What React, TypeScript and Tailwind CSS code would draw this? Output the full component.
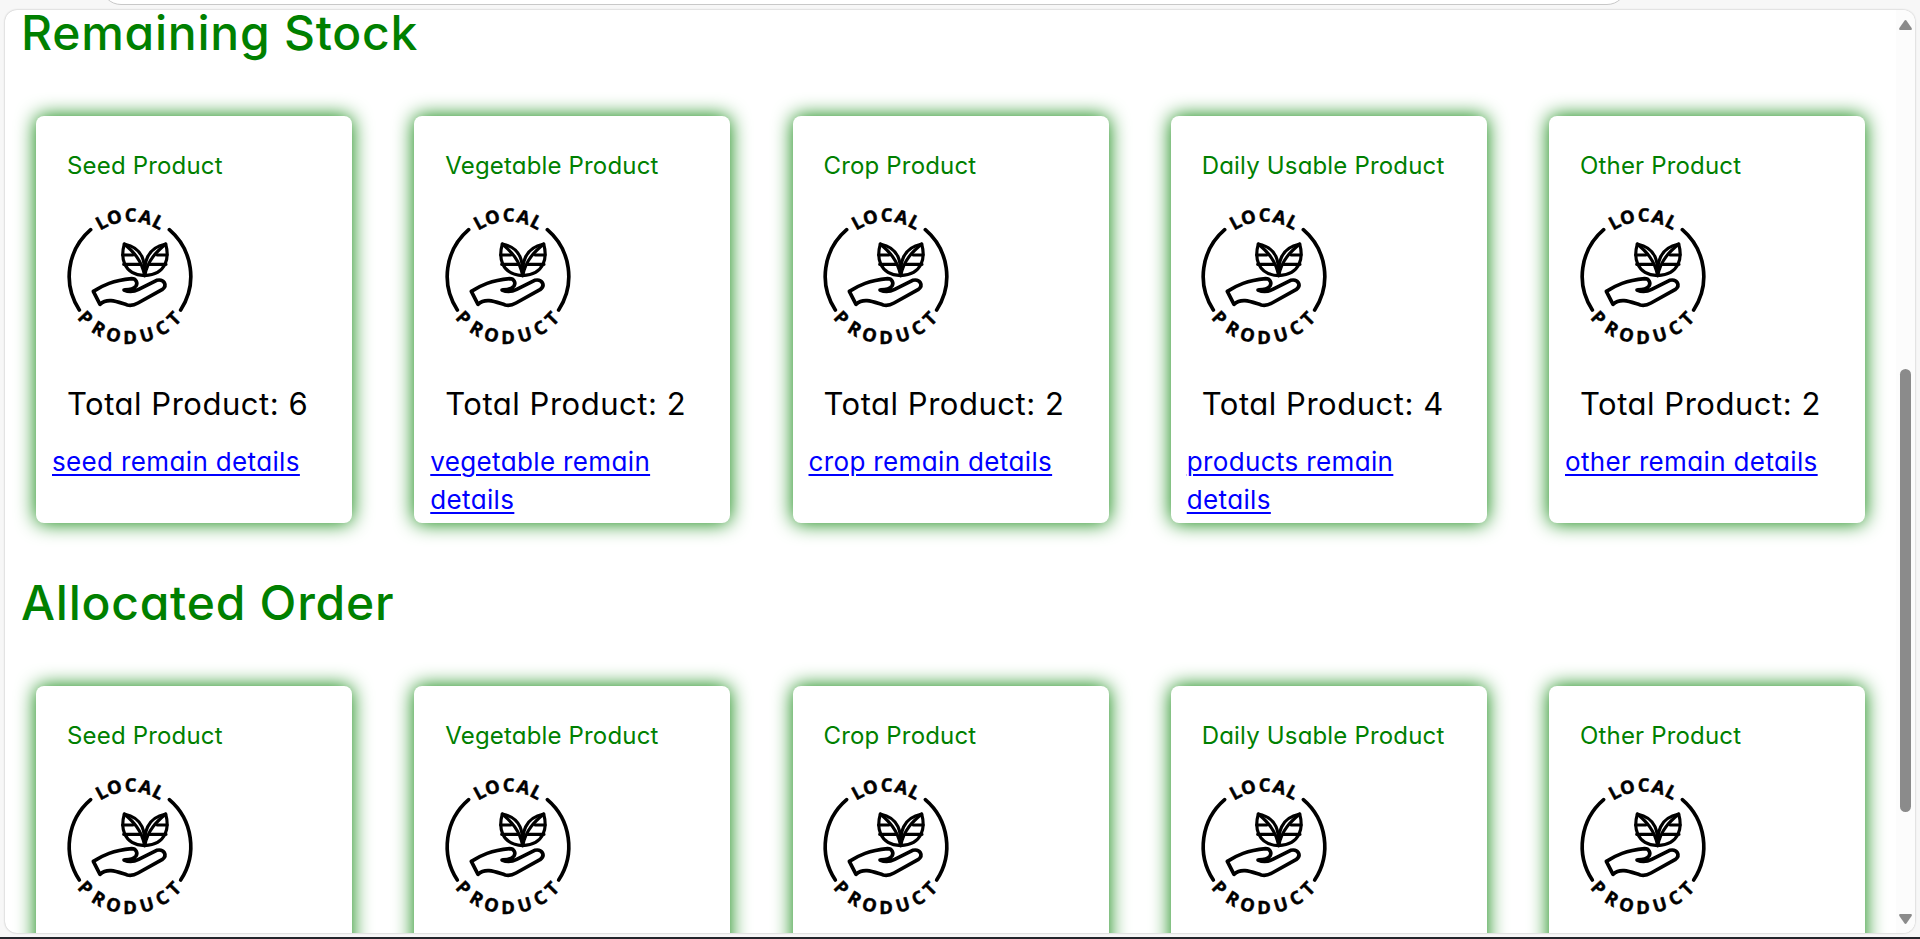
import React from "react";

type Item = { title: string; total: number; link: string };

const items: Item[] = [
  { title: "Seed Product", total: 6, link: "seed remain details" },
  { title: "Vegetable Product", total: 2, link: "vegetable remain details" },
  { title: "Crop Product", total: 2, link: "crop remain details" },
  { title: "Daily Usable Product", total: 4, link: "products remain details" },
  { title: "Other Product", total: 2, link: "other remain details" },
];

const topLetters: [string, number][] = [["L", -28], ["O", -15], ["C", 0.5], ["A", 15], ["L", 28]];
const bottomLetters: [string, number][] = [
  ["P", 46.5], ["R", 30.5], ["O", 15.5], ["D", 0], ["U", -16], ["C", -31.5], ["T", -45.5],
];

function LocalProductLogo() {
  return (
    <svg viewBox="0 0 480 510" className="h-[170px] w-[160px] shrink-0" fill="none" stroke="#000" strokeWidth="11" strokeLinecap="round" strokeLinejoin="round">
      <path d="M122 119 A184 184 0 0 0 88 360" />
      <path d="M358 119 A184 184 0 0 1 392 360" />
      <g fill="#000" strokeWidth="1.5" fontFamily="'Open Sans', sans-serif" fontWeight="700" fontSize="55" textAnchor="middle">
        {topLetters.map(([c, a], i) => (
          <text key={i} transform={`translate(240 257) rotate(${a})`} y="-162">{c}</text>
        ))}
        {bottomLetters.map(([c, a], i) => (
          <text key={i} transform={`translate(240 257) rotate(${a})`} y="204">{c}</text>
        ))}
      </g>
      <path d="M130 304 C160 285 188 272 245 266 C258 266 264 278 258 288 C250 299 238 299 222 300 C236 306 250 306 266 298 L320 271 C342 266 354 286 336 299 L264 339 C250 347 244 348 232 345 C205 337 174 321 150 343 Z" />
      <g strokeWidth="9.5">
        <path d="M223 162 C212 200 217 253 284 257 C285 220 282 174 223 162 Z" />
        <path d="M347 162 C358 200 352 253 284 257 C283 220 288 174 347 162 Z" />
        <path d="M223 162 C250 185 275 210 284 257 C293 210 320 185 347 162" />
        <path d="M218 195 H248 M221 223 H270 M298 223 H348 M322 195 H351" />
      </g>
    </svg>
  );
}

function Card({ item, summary }: { item: Item; summary: boolean }) {
  return (
    <article className="flex h-[407px] w-[316px] shrink-0 flex-col rounded-lg bg-white shadow-[0_0_20px_green]">
      <h2 className="mt-[32px] ml-[31px] text-[24px] leading-9 tracking-[0.17px] whitespace-nowrap text-[green]">{item.title}</h2>
      <div className="mt-[6px] ml-[13.5px] flex">
        <LocalProductLogo />
      </div>
      {summary && (
        <>
          <p className="mt-[20px] ml-[31px] text-[31px] leading-[48px] tracking-[0.52px] whitespace-nowrap text-black">Total Product: {item.total}</p>
          <a href="#" className="mt-[15px] ml-4 block w-[268px] text-[26px] leading-[38px] tracking-[0.36px] text-[#0000ff] underline decoration-2 underline-offset-[3px]">{item.link}</a>
        </>
      )}
    </article>
  );
}

function Section({ title, summary = false }: { title: string; summary?: boolean }) {
  return (
    <section className="flex h-[570px] shrink-0 flex-col">
      <h1 className="h-[106px] pl-4 text-[48px] leading-[46px] font-medium tracking-[0.75px] text-[green]">{title}</h1>
      <div className="flex gap-[62.25px] pl-[31px]">
        {items.map((item) => (
          <Card key={item.title} item={item} summary={summary} />
        ))}
      </div>
    </section>
  );
}

export default function App() {
  return (
    <div className="flex h-[939px] w-[1920px] flex-col overflow-hidden bg-[#f7f7f7] font-[Inter,sans-serif] [font-feature-settings:'cv11']">
      <div className="flex h-[10px] shrink-0 items-end pb-[5px] pl-[101px]">
        <div className="h-[40px] w-[1526px] shrink-0 rounded-[20px] border-[1px] border-[#c8c8c8] bg-white" />
      </div>
      <main className="ml-[5px] flex h-[923px] w-[1910px] shrink-0 overflow-hidden rounded-xl bg-white shadow-[0_0_2px_rgba(0,0,0,0.3)]">
        <div className="flex min-w-0 flex-1 flex-col overflow-hidden">
          <Section title="Remaining Stock" summary />
          <Section title="Allocated Order" />
        </div>
        <aside className="flex w-[19px] shrink-0 flex-col items-center bg-[#fcfcfc]">
          <svg viewBox="0 0 13 10" className="mt-[10px] h-[10px] w-[13px]" fill="#8b8b8b">
            <path d="M5.4 .7Q6.5-.5 7.6.7L12.6 8Q13.3 9.8 12 10H1Q-.3 9.8.4 8Z" />
          </svg>
          <div className="mt-[339px] h-[443px] w-[11px] rounded-full bg-[#8b8b8b]" />
          <svg viewBox="0 0 13 10" className="mt-[102px] h-[10px] w-[13px]" fill="#8b8b8b">
            <path d="M5.4 9.3Q6.5 10.5 7.6 9.3L12.6 2Q13.3.2 12 0H1Q-.3.2.4 2Z" />
          </svg>
        </aside>
      </main>
      <div className="mt-[4px] h-[2px] shrink-0 bg-[#24252b]" />
    </div>
  );
}
